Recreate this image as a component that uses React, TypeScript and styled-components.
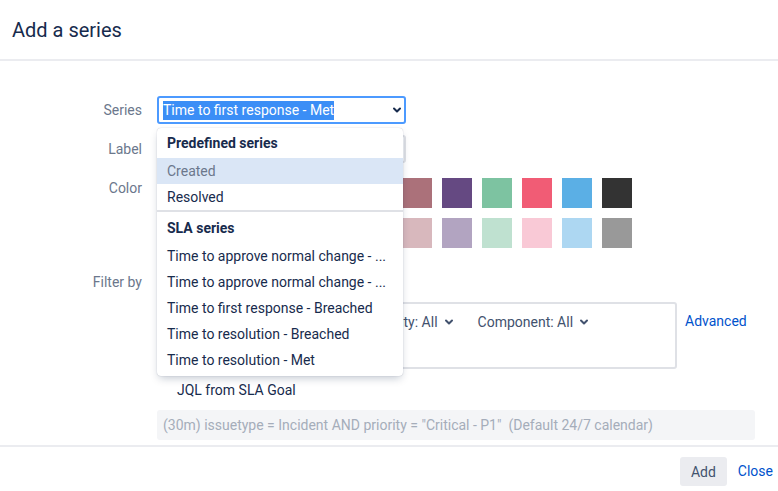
import { useLayoutEffect, useRef } from 'react';
import styled, { createGlobalStyle } from 'styled-components';

const GlobalStyle = createGlobalStyle`
  html, body {
    margin: 0;
    padding: 0;
    background: #fff;
  }
  body {
    font-family: Roboto, "Noto Sans", "Liberation Sans", sans-serif;
    font-size: 14px;
    color: #172b4d;
  }
  * {
    box-sizing: border-box;
  }
`;

const Dialog = styled.div`
  width: 778px;
  height: 491px;
  display: flex;
  flex-direction: column;
  background: #fff;
`;

const Header = styled.header`
  height: 61px;
  flex: none;
  display: flex;
  align-items: center;
  padding: 0 12px 0;
  border-bottom: 2px solid #ebecf0;
`;

const Title = styled.h2`
  margin: 0;
  font-size: 20px;
  font-weight: 400;
  color: #172b4d;
`;

const Body = styled.div`
  height: 384px;
  flex: none;
  overflow-y: scroll;
  padding: 55px 0 50px;

  &::-webkit-scrollbar {
    width: 3px;
  }
  &::-webkit-scrollbar-track {
    background: #f0f0f0;
  }
  &::-webkit-scrollbar-thumb {
    background: #c1c1c1;
  }
`;

const Form = styled.div`
  display: flex;
  flex-direction: column;
`;

const Row = styled.div<{ $gap?: number }>`
  display: grid;
  grid-template-columns: 142px 1fr;
  column-gap: 15px;
  margin-top: ${(p) => p.$gap ?? 0}px;
`;

const FieldLabel = styled.div<{ $top?: number }>`
  text-align: right;
  color: #6b778c;
  line-height: 20px;
  padding-top: ${(p) => p.$top ?? 4}px;
`;

const Field = styled.div`
  position: relative;
  min-width: 0;
`;

const SelectBox = styled.div`
  width: 249px;
  height: 28px;
  border: 2px solid #4c9aff;
  border-radius: 3px;
  display: flex;
  align-items: center;
  justify-content: space-between;
  padding: 0 2px 0 4px;
  background: #fff;
`;

const Highlight = styled.span`
  background: #3b8ef6;
  color: #fff;
  line-height: 19px;
`;

const TextInput = styled.div`
  width: 249px;
  height: 28px;
  border: 2px solid #dfe1e6;
  border-radius: 3px;
  background: #fafbfc;
`;

const Swatches = styled.div`
  display: grid;
  grid-template-columns: repeat(12, 30px);
  gap: 10px;
  padding-left: 5px;
`;

const Swatch = styled.div<{ $color: string }>`
  width: 30px;
  height: 30px;
  background: ${(p) => p.$color};
`;

const FilterMode = styled.div`
  height: 20px;
`;

const FilterLine = styled.div`
  display: flex;
  align-items: flex-start;
  gap: 8px;
  margin-top: 10px;
`;

const FilterBox = styled.div`
  width: 520px;
  height: 67px;
  flex: none;
  border: 2px solid #dfe1e6;
  border-radius: 3px;
  display: flex;
  flex-wrap: nowrap;
  align-items: flex-start;
  gap: 24px;
  padding: 8px 10px 8px 16px;
  overflow: hidden;
`;

const Chip = styled.span`
  display: inline-flex;
  align-items: center;
  gap: 6px;
  flex: none;
  white-space: nowrap;
  line-height: 20px;
  color: #42526e;
`;

const Link = styled.a`
  color: #0052cc;
  text-decoration: none;
  line-height: 20px;
  cursor: pointer;
`;

const AdvancedLink = styled(Link)`
  margin-top: 9px;
`;

const JqlTitle = styled.div`
  line-height: 20px;
  padding-left: 20px;
  margin-top: 11px;
  color: #172b4d;
`;

const JqlBox = styled.div`
  width: 598px;
  height: 30px;
  margin-top: 10px;
  background: #f4f5f7;
  border-radius: 3px;
  padding: 0 6px;
  display: flex;
  align-items: center;
  color: #a5adba;
  white-space: pre;
`;

const Menu = styled.div`
  position: absolute;
  top: 32px;
  left: 0;
  width: 246px;
  background: #fff;
  border-radius: 4px;
  padding: 0 0 3px;
  box-shadow: 0 4px 8px -2px rgba(9, 30, 66, 0.25), 0 0 1px rgba(9, 30, 66, 0.31);
  z-index: 10;
`;

const Group = styled.div<{ $divider?: boolean }>`
  border-top: ${(p) => (p.$divider ? '2px solid #dfe1e6' : 'none')};
  padding-top: ${(p) => (p.$divider ? 1 : 0)}px;
`;

const GroupHeading = styled.div`
  font-weight: 700;
  color: #172b4d;
  line-height: 20px;
  padding: 5px 10px;
`;

const Option = styled.div<{ $active?: boolean }>`
  line-height: 20px;
  padding: 3px 10px;
  white-space: nowrap;
  overflow: hidden;
  color: ${(p) => (p.$active ? '#6b778c' : '#172b4d')};
  background: ${(p) => (p.$active ? '#dae6f6' : 'transparent')};
`;

const Footer = styled.footer`
  flex: 1;
  border-top: 2px solid #ebecf0;
  display: flex;
  justify-content: flex-end;
  align-items: flex-start;
  padding: 10px 5px 0 0;
  gap: 11px;
`;

const Button = styled.button`
  height: 29px;
  padding: 0 11px;
  border: none;
  border-radius: 3px;
  background: #ebecf0;
  color: #42526e;
  font: inherit;
`;

const FooterLink = styled(Link)`
  line-height: 29px;
`;

function Chevron({ color = '#172b4d' }: { color?: string }) {
  return (
    <svg width="10" height="10" viewBox="0 0 10 10" fill="none">
      <path d="M2 3.5l3 3 3-3" stroke={color} strokeWidth="2" strokeLinecap="round" strokeLinejoin="round" />
    </svg>
  );
}

const darkColors = ['#3b7fc4', '#8eb021', '#d39c3f', '#f6c342', '#815b3a', '#f691b2', '#ab717a', '#654982', '#7dc3a1', '#f15c75', '#5bafe5', '#333333'];
const lightColors = ['#b3d4ff', '#d1e6a6', '#f0d5a8', '#fbe6ad', '#d5c4b5', '#fbd3e0', '#d8b8bd', '#b2a4c1', '#bfe1d0', '#f9c9d6', '#add7f2', '#999999'];

const filters = ['Type: All', 'Status: All', 'Priority: All', 'Component: All'];

const slaSeries = [
  'Time to approve normal change - ...',
  'Time to approve normal change - ...',
  'Time to first response - Breached',
  'Time to resolution - Breached',
  'Time to resolution - Met',
];

export default function App() {
  const bodyRef = useRef<HTMLDivElement>(null);

  useLayoutEffect(() => {
    if (bodyRef.current) bodyRef.current.scrollTop = 20;
  }, []);

  return (
    <>
      <GlobalStyle />
      <Dialog>
        <Header>
          <Title>Add a series</Title>
        </Header>
        <Body ref={bodyRef}>
          <Form>
            <Row>
              <FieldLabel>Series</FieldLabel>
              <Field>
                <SelectBox>
                  <Highlight>Time to first response - Met</Highlight>
                  <Chevron />
                </SelectBox>
                <Menu>
                  <Group>
                    <GroupHeading>Predefined series</GroupHeading>
                    <Option $active>Created</Option>
                    <Option>Resolved</Option>
                  </Group>
                  <Group $divider>
                    <GroupHeading>SLA series</GroupHeading>
                    {slaSeries.map((s, i) => (
                      <Option key={i}>{s}</Option>
                    ))}
                  </Group>
                </Menu>
              </Field>
            </Row>
            <Row $gap={11}>
              <FieldLabel>Label</FieldLabel>
              <Field>
                <TextInput />
              </Field>
            </Row>
            <Row $gap={15}>
              <FieldLabel $top={0}>Color</FieldLabel>
              <Field>
                <Swatches>
                  {darkColors.map((c, i) => (
                    <Swatch key={'d' + i} $color={c} />
                  ))}
                  {lightColors.map((c, i) => (
                    <Swatch key={'l' + i} $color={c} />
                  ))}
                </Swatches>
              </Field>
            </Row>
            <Row $gap={24}>
              <FieldLabel $top={0}>Filter by</FieldLabel>
              <Field>
                <FilterMode />
                <FilterLine>
                  <FilterBox>
                    {filters.map((f) => (
                      <Chip key={f}>
                        {f} <Chevron color="#42526e" />
                      </Chip>
                    ))}
                  </FilterBox>
                  <AdvancedLink>Advanced</AdvancedLink>
                </FilterLine>
                <JqlTitle>JQL from SLA Goal</JqlTitle>
                <JqlBox>(30m) issuetype = Incident AND priority = "Critical - P1"  (Default 24/7 calendar)</JqlBox>
              </Field>
            </Row>
          </Form>
        </Body>
        <Footer>
          <Button>Add</Button>
          <FooterLink>Close</FooterLink>
        </Footer>
      </Dialog>
    </>
  );
}
